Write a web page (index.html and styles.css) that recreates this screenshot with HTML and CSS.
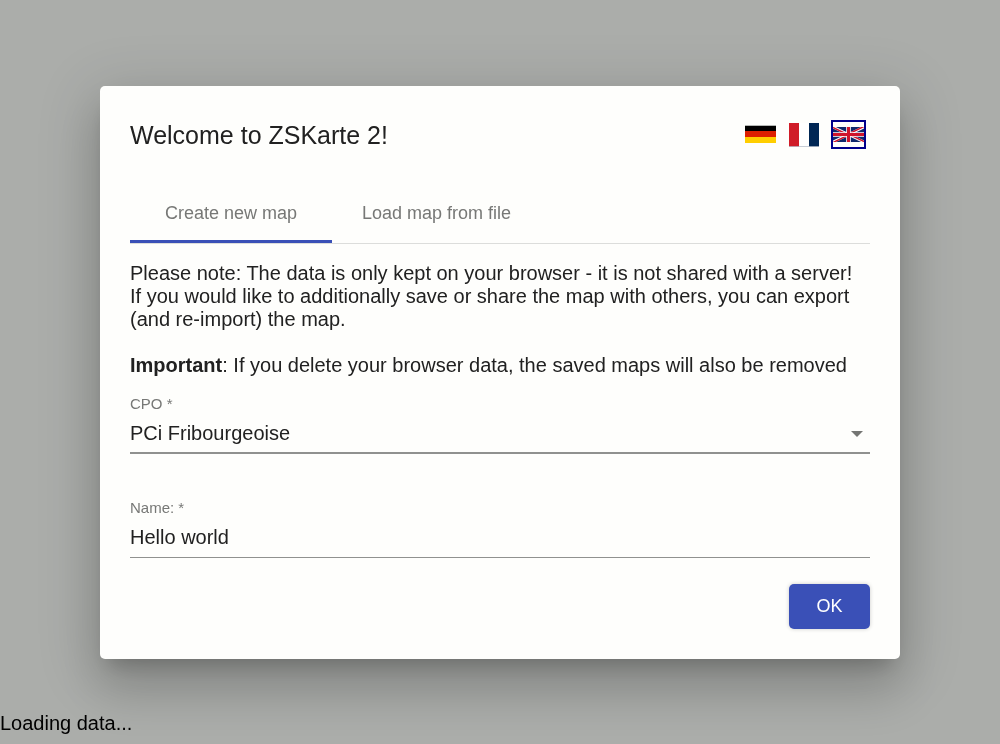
FILE: index.html
```html
<!DOCTYPE html>
<html lang="en">
<head>
<meta charset="utf-8">
<meta name="viewport" content="width=device-width, initial-scale=1">
<title>ZSKarte 2</title>
<link rel="stylesheet" href="styles.css">
</head>
<body>
<p class="loading">Loading data...</p>
<div class="overlay">
  <form class="dialog" role="dialog" aria-labelledby="dialog-title">
    <header class="dialog-header">
      <h1 class="dialog-title" id="dialog-title">Welcome to ZSKarte 2!</h1>
      <div class="languages">
        <button class="language" type="button" aria-label="Deutsch">
          <svg class="flag" viewBox="0 0 31 25">
            <path fill="#000" d="M0 3h31v6H0z"/>
            <path fill="#dd1f00" d="M0 9h31v6H0z"/>
            <path fill="#ffce00" d="M0 15h31v6H0z"/>
            <path fill="#b5b8b5" d="M0 3h31v1H0z"/>
          </svg>
        </button>
        <button class="language" type="button" aria-label="Français">
          <svg class="flag" viewBox="0 0 31 25">
            <path fill="#d01c28" d="M0 1h10v24H0z"/>
            <path fill="#fff" d="M10 1h10v24H10z"/>
            <path fill="#002654" d="M20 1h10v24H20z"/>
            <path fill="#b9c0cc" fill-opacity=".8" d="M0 24h30v1H0z"/>
          </svg>
        </button>
        <button class="language language-active" type="button" aria-label="English">
          <svg class="flag" viewBox="0 0 31 25">
            <svg y="5" width="31" height="15" viewBox="0 0 60 30" preserveAspectRatio="none">
              <path fill="#10286b" d="M0 0h60v30H0z"/>
              <path stroke="#fff" stroke-width="5" d="M0 0l60 30M60 0L0 30"/>
              <path stroke="#cf142b" stroke-width="3" d="M0 1l30 15M30 14l30 15M60 -1L30 14M30 16L0 31"/>
              <path stroke="#fff" stroke-width="9" d="M30 0v30M0 15h60"/>
              <path stroke="#cf142b" stroke-width="6" d="M30 0v30M0 15h60"/>
            </svg>
          </svg>
        </button>
      </div>
    </header>
    <div class="tabs" role="tablist">
      <button class="tab tab-active" type="button" role="tab" aria-selected="true">Create new map</button>
      <button class="tab" type="button" role="tab" aria-selected="false">Load map from file</button>
    </div>
    <div class="notes">
      <p class="note">Please note: The data is only kept on your browser - it is not shared with a server!<br>If you would like to additionally save or share the map with others, you can export (and re-import) the map.</p>
      <p class="note"><strong>Important</strong>: If you delete your browser data, the saved maps will also be removed</p>
    </div>
    <div class="fields">
      <div class="field">
        <label class="field-label" for="cpo">CPO *</label>
        <div class="select-box">
          <select class="control control-select" id="cpo" required>
            <option>PCi Fribourgeoise</option>
          </select>
          <svg class="arrow" viewBox="0 0 12 6" aria-hidden="true"><path d="M0 0h12L6 6z"/></svg>
        </div>
      </div>
      <div class="field">
        <label class="field-label" for="name">Name: *</label>
        <input class="control" id="name" type="text" value="Hello world" required>
      </div>
    </div>
    <footer class="actions">
      <button class="ok" type="button">OK</button>
    </footer>
  </form>
</div>
</body>
</html>
```
FILE: styles.css
```css
* {
  box-sizing: border-box;
}

body {
  display: flex;
  flex-direction: column;
  justify-content: flex-end;
  min-height: 100vh;
  margin: 0;
  background: #abadaa;
  color: #000;
  font: 20px/23px "Liberation Sans", Arial, sans-serif;
}

button,
input,
select {
  margin: 0;
  font-family: inherit;
}

.loading {
  position: relative;
  z-index: 1;
  margin: 0;
  padding-bottom: 9px;
}

.overlay {
  position: fixed;
  inset: 0;
  display: flex;
  align-items: center;
  justify-content: center;
  padding-top: 1px;
}

.dialog {
  width: 80%;
  padding: 30px;
  border-radius: 5px;
  background: #fefefc;
  color: #212121;
  box-shadow:
    0 14px 19px -9px rgba(0, 0, 0, 0.2),
    0 30px 48px 4px rgba(0, 0, 0, 0.14),
    0 11px 58px 10px rgba(0, 0, 0, 0.12);
}

.dialog-header {
  display: flex;
  align-items: center;
  justify-content: space-between;
  height: 37px;
  padding-right: 4px;
}

.dialog-title {
  margin: 0;
  font-size: 25px;
  font-weight: 400;
  line-height: 40px;
}

.languages {
  display: flex;
  gap: 9px;
}

.language {
  display: flex;
  padding: 0;
  border: 2px solid transparent;
  background: none;
}

.language-active {
  border-color: #00008b;
}

.flag {
  width: 31px;
  height: 25px;
}

.tabs {
  display: flex;
  margin-top: 29px;
  border-bottom: 1px solid #dcdddb;
}

.tab {
  min-width: 202px;
  height: 61px;
  padding: 4px 30px 0;
  border: 0;
  border-bottom: 3px solid transparent;
  background: none;
  color: #777876;
  font-size: 18px;
}

.tab-active {
  border-bottom-color: #3a50b7;
}

.notes {
  display: grid;
  gap: 23px;
  padding-top: 18px;
}

.note {
  margin: 0;
}

.fields {
  display: grid;
  gap: 44px;
  padding-top: 17px;
}

.field {
  display: grid;
}

.field-label {
  color: #777876;
  font-size: 15px;
  line-height: 20px;
}

.select-box {
  display: grid;
  align-items: center;
}

.select-box > * {
  grid-area: 1 / 1;
}

.control {
  width: 100%;
  height: 40px;
  padding: 0;
  border: 0;
  border-bottom: 1px solid #90918f;
  border-radius: 0;
  outline: 0;
  appearance: none;
  background: none;
  color: #212121;
  font-size: 20px;
}

.control-select {
  border-bottom-width: 2px;
}

.arrow {
  justify-self: end;
  width: 12px;
  height: 6px;
  margin-right: 7px;
  fill: #747573;
  pointer-events: none;
}

.actions {
  display: flex;
  justify-content: flex-end;
  padding-top: 26px;
}

.ok {
  width: 81px;
  height: 45px;
  border: 0;
  border-radius: 5px;
  background: #3a50b7;
  color: #fff;
  font-size: 18px;
  box-shadow: 0 0 4px rgba(0, 0, 0, 0.2);
}
```
